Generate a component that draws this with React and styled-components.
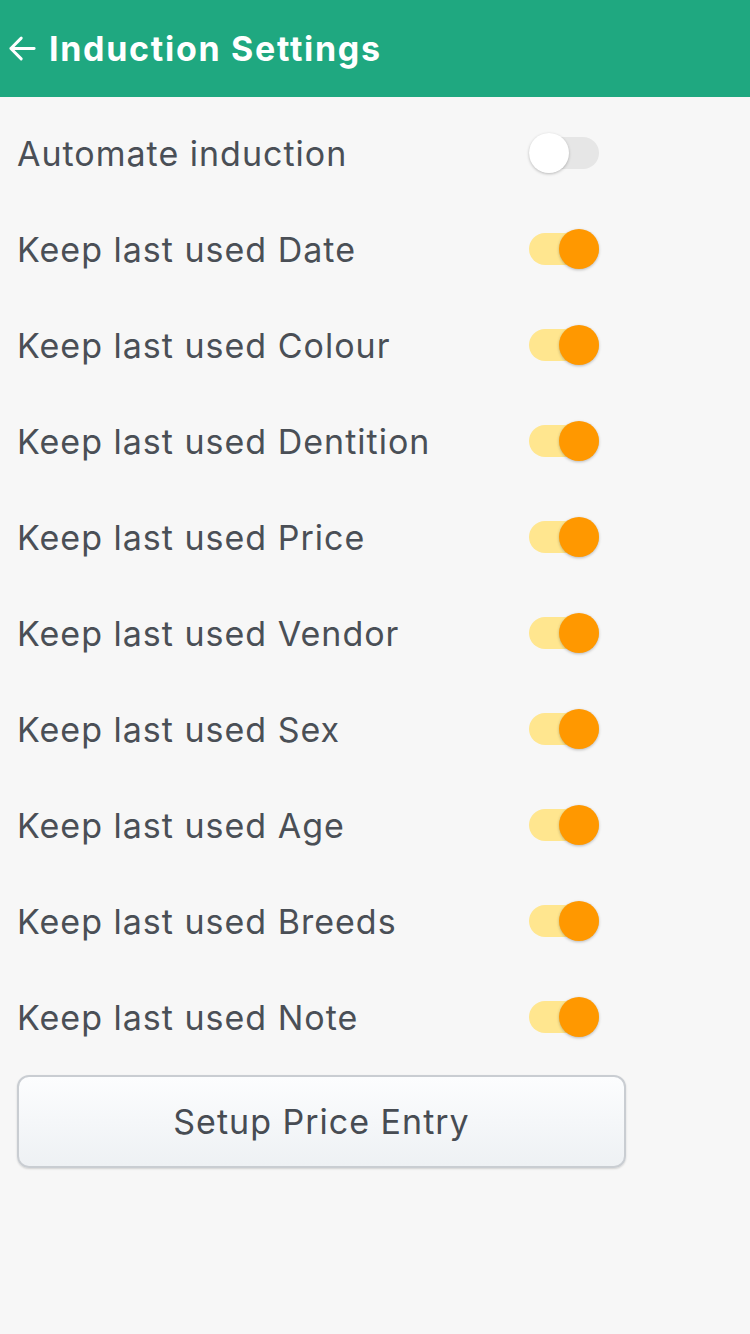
import React from "react";
import styled, { createGlobalStyle } from "styled-components";

const GlobalStyle = createGlobalStyle`
  html, body {
    margin: 0;
    padding: 0;
    background: #f7f7f7;
    font-family: Inter, "Liberation Sans", sans-serif;
  }
`;

const Page = styled.div`
  width: 750px;
  min-height: 1334px;
  background: #f7f7f7;
`;

const Header = styled.header`
  height: 97px;
  background: #1fa880;
  display: flex;
  align-items: center;
  padding: 0 7px;
  box-sizing: border-box;
  gap: 11px;
  color: #ffffff;
`;

const BackArrow = styled.svg`
  width: 31px;
  height: 31px;
  flex-shrink: 0;
`;

const Title = styled.h1`
  margin: 0;
  font-size: 34px;
  font-weight: 700;
  letter-spacing: 1.7px;
`;

const List = styled.div`
  padding: 8px 0 0;
`;

const Row = styled.div`
  height: 96px;
  display: flex;
  align-items: center;
  padding-left: 17px;
`;

const Label = styled.span`
  width: 512px;
  font-size: 34px;
  color: #4a4f56;
  letter-spacing: 1px;
`;

const Track = styled.div`
  position: relative;
  width: 70px;
  height: 32px;
  border-radius: 16px;
  background: ${({ $on }) => ($on ? "#ffe68f" : "#e6e6e6")};
`;

const Knob = styled.div`
  position: absolute;
  top: -4px;
  left: ${({ $on }) => ($on ? "30px" : "0")};
  width: 40px;
  height: 40px;
  border-radius: 50%;
  background: ${({ $on }) => ($on ? "#ff9800" : "#ffffff")};
  box-shadow: 0 1px 3px rgba(0, 0, 0, 0.25);
`;

const Button = styled.button`
  margin: 10px 0 0 17px;
  width: 609px;
  height: 93px;
  border: 2px solid #c9cdd2;
  border-radius: 12px;
  background: linear-gradient(#fcfdfe, #eef1f4);
  font-family: Inter, "Liberation Sans", sans-serif;
  font-size: 34px;
  color: #474c53;
  letter-spacing: 1px;
  box-shadow: 0 1px 2px rgba(0, 0, 0, 0.15);
`;

const Toggle = ({ on }) => (
  <Track $on={on}>
    <Knob $on={on} />
  </Track>
);

const settings = [
  ["Automate induction", false],
  ["Keep last used Date", true],
  ["Keep last used Colour", true],
  ["Keep last used Dentition", true],
  ["Keep last used Price", true],
  ["Keep last used Vendor", true],
  ["Keep last used Sex", true],
  ["Keep last used Age", true],
  ["Keep last used Breeds", true],
  ["Keep last used Note", true],
];

export default function App() {
  return (
    <Page>
      <GlobalStyle />
      <Header>
        <BackArrow viewBox="0 0 24 24" fill="none" stroke="#fff" strokeWidth="2.3" strokeLinecap="round" strokeLinejoin="round">
          <path d="M21 12H3M11 4l-8 8 8 8" />
        </BackArrow>
        <Title>Induction Settings</Title>
      </Header>
      <List>
        {settings.map(([label, on]) => (
          <Row key={label}>
            <Label>{label}</Label>
            <Toggle on={on} />
          </Row>
        ))}
      </List>
      <Button>Setup Price Entry</Button>
    </Page>
  );
}
